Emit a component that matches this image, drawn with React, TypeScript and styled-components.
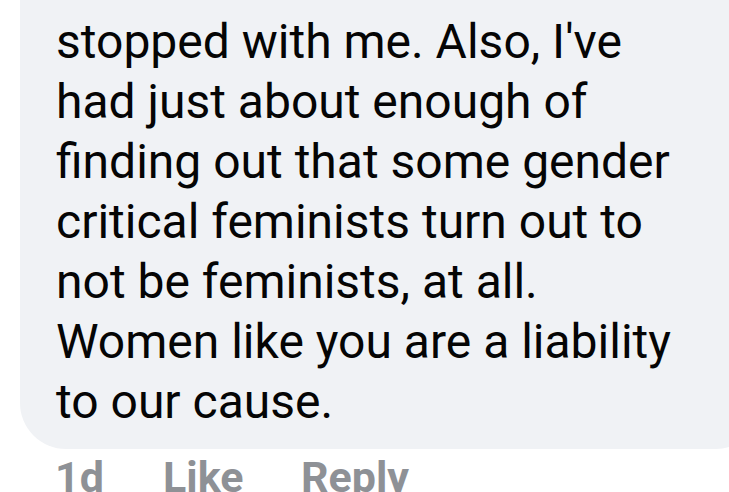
import React from "react";
import styled, { createGlobalStyle } from "styled-components";

const Global = createGlobalStyle`
  html, body { margin: 0; padding: 0; background: #ffffff; overflow: hidden; }
  body { width: 729px; height: 492px; }
`;

const Page = styled.div`
  width: 729px;
  height: 492px;
  overflow: hidden;
  font-family: Roboto, "Liberation Sans", sans-serif;
`;

const Bubble = styled.div`
  margin-left: 20px;
  width: 740px;
  box-sizing: border-box;
  background: #f0f2f5;
  border-radius: 0 0 44px 46px;
  padding: 12px 0 17px 36px;
`;

const Body = styled.p`
  margin: 0;
  font-size: 48px;
  line-height: 60px;
  color: #050505;
  white-space: pre-line;
`;

const Actions = styled.div`
  display: flex;
  margin: 3px 0 0 55px;
`;

const Action = styled.span<{ $w: number }>`
  display: inline-block;
  width: ${(p) => p.$w}px;
  font-size: 43px;
  line-height: 50px;
  font-weight: 700;
  color: #8e9196;
`;

const lines = [
  "stopped with me. Also, I've",
  "had just about enough of",
  "finding out that some gender",
  "critical feminists turn out to",
  "not be feminists, at all.",
  "Women like you are a liability",
  "to our cause.",
];

export default function App() {
  return (
    <Page>
      <Global />
      <Bubble>
        <Body>{lines.join("\n")}</Body>
      </Bubble>
      <Actions>
        <Action $w={108}>1d</Action>
        <Action $w={138}>Like</Action>
        <Action $w={140}>Reply</Action>
      </Actions>
    </Page>
  );
}
